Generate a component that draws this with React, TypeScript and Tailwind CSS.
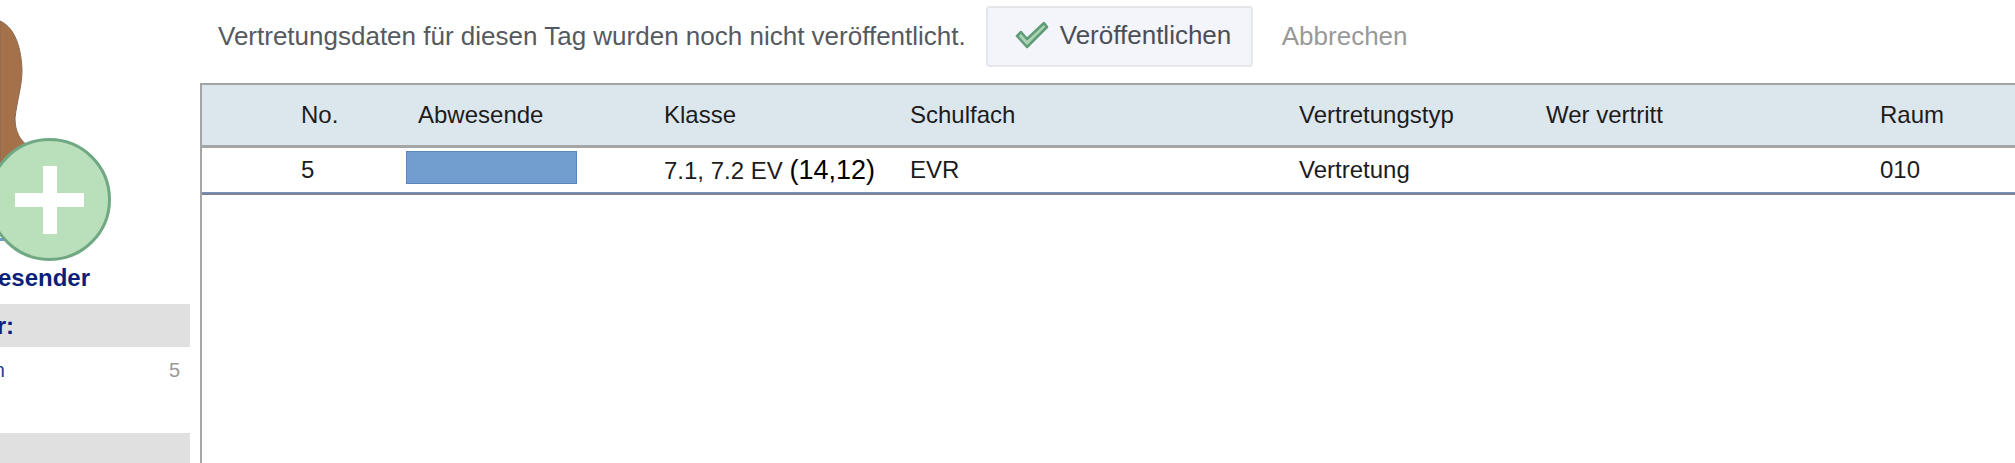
const columns = ['No.', 'Abwesende', 'Klasse', 'Schulfach', 'Vertretungstyp', 'Wer vertritt', 'Raum'];

const rowClass = 'grid grid-cols-[117px_246px_246px_389px_247px_334px_1fr] pl-[99px] items-center';

// Avatar with the green "add" badge, cut off by the sidebar on the left
const AddAvatar = () => (
  <svg width="200" height="262" viewBox="0 0 200 262" className="block">
    <path
      d="M0 21C12 26 21 42 22 70C22 86 17 100 15 118C15 132 20 140 28 146L0 200Z"
      fill="#a5714a"
      stroke="#8a6a52"
      strokeWidth="1"
    />
    <rect x="0" y="238" width="4" height="3" fill="#6f9bd1" />
    <circle cx="49.5" cy="199.5" r="60" fill="#b9dfbb" stroke="#70a883" strokeWidth="3" />
    <rect x="15" y="193" width="69" height="14" fill="#ffffff" />
    <rect x="43" y="166" width="14" height="68" fill="#ffffff" />
  </svg>
);

const Sidebar = () => (
  <aside className="w-[200px] h-[463px] shrink-0 overflow-hidden">
    <AddAvatar />
    <div className="flex justify-end pr-[110px] h-[32px] items-center whitespace-nowrap text-[24px] font-bold text-[#0a1f7a]">
      Abwesender
    </div>
    <div className="w-[190px] h-[43px] mt-[10px] flex justify-end items-center pr-[176px] bg-[#e0e0e0] whitespace-nowrap text-[24px] font-bold text-[#0a1f7a]">
      Lehrer:
    </div>
    <div className="w-[190px] h-[86px] flex justify-between pt-[8px] pr-[10px] text-[20px] leading-[30px]">
      <span className="flex justify-end w-[5px] whitespace-nowrap text-[#1d4690]">Ausfallen</span>
      <span className="text-[#999999]">5</span>
    </div>
    <div className="w-[190px] h-[40px] bg-[#e0e0e0]" />
  </aside>
);

export default function App() {
  return (
    <div className="flex w-[2015px] h-[463px] overflow-hidden bg-white font-['Liberation_Sans',Arial,sans-serif] text-[24px]">
      <Sidebar />
      <main className="flex-1 min-w-0 flex flex-col">
        <div className="h-[83px] flex items-start pl-[18px] pt-[6px] text-[26px]">
          <span className="text-[#555a60] mt-[11px] whitespace-nowrap">
            Vertretungsdaten für diesen Tag wurden noch nicht veröffentlicht.
          </span>
          <button className="ml-[20px] w-[267px] h-[61px] flex items-center pl-[27px] pb-[3px] bg-[#f4f5fa] border-2 border-[#e4e6ea] rounded-[4px] text-[#4a4f57]">
            <svg width="34" height="28" viewBox="0 0 34 28" className="mr-[11px] shrink-0">
              <path
                d="M2 15L6 11L12 18L29 2L32 6L12 26Z"
                fill="#a9d3b2"
                stroke="#5f9c78"
                strokeWidth="2.5"
                strokeLinejoin="round"
              />
            </svg>
            Veröffentlichen
          </button>
          <span className="ml-[29px] mt-[11px] text-[#999999]">Abbrechen</span>
        </div>
        <div className="flex-1 border-l-2 border-t-2 border-[#a5a5a5]">
          <div className={`${rowClass} h-[60px] bg-[#dce6ed] text-[#1c1c1c] border-b-[3px] border-[#a5a5a5] box-content`}>
            {columns.map((name) => (
              <div key={name}>{name}</div>
            ))}
          </div>
          <div className={`${rowClass} h-[44px] text-[#1c1c1c]`}>
            <div>5</div>
            <div className="relative h-full">
              <div className="absolute left-[-12px] top-[3px] w-[171px] h-[33px] bg-[#729dcf] border border-[#5b86bb]" />
            </div>
            <div className="whitespace-nowrap">
              7.1, 7.2 EV <span className="text-black text-[27px]">(14,12)</span>
            </div>
            <div>EVR</div>
            <div>Vertretung</div>
            <div />
            <div>010</div>
          </div>
          <div className="h-[3px] bg-[#7592c4] border-b-2 border-[#7d8590]" />
        </div>
      </main>
    </div>
  );
}
